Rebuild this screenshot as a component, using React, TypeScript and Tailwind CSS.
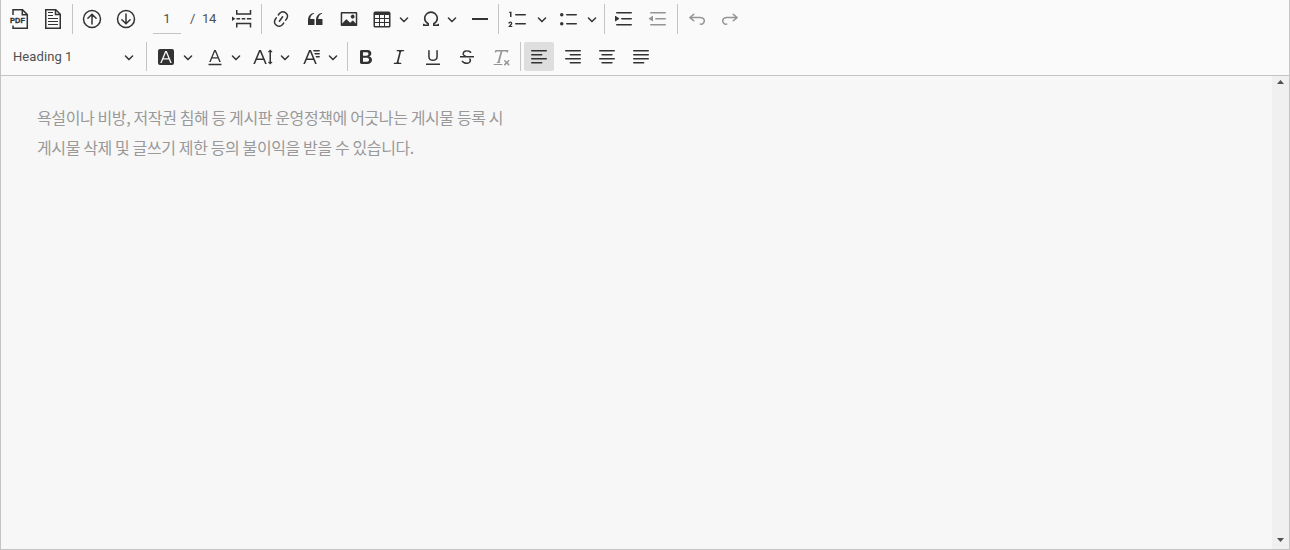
import React from 'react';

type IconProps = { className?: string; children: React.ReactNode };

function Icon({ className = '', children }: IconProps) {
  return (
    <svg viewBox="0 0 20 20" className={`h-5 w-5 shrink-0 fill-current ${className}`}>
      {children}
    </svg>
  );
}

function Chevron({ className = '' }: { className?: string }) {
  return (
    <svg viewBox="0 0 10 10" className={`h-2.5 w-2.5 shrink-0 fill-current ${className}`}>
      <path d="M.941 4.523a.75.75 0 1 1 1.06-1.06l3.006 3.005 3.005-3.005a.75.75 0 1 1 1.06 1.06l-3.549 3.55a.75.75 0 0 1-1.168-.136L.941 4.523z" />
    </svg>
  );
}

function Separator({ className = '' }: { className?: string }) {
  return <span className={`w-px shrink-0 bg-[#c4c4c4] ${className}`} />;
}

const line = { fill: 'none', stroke: 'currentColor', strokeWidth: 1.5, strokeLinecap: 'round' as const };

function TopRow() {
  return (
    <div className="flex h-[38px] items-center pl-2">
      <Icon>
        <path d="M4 6V.8h9.5l4.8 4.8v13.6H4V16.5" fill="none" stroke="currentColor" strokeWidth="1.5" />
        <path d="M13.3 1v4.8h4.8" fill="none" stroke="currentColor" strokeWidth="1.5" />
        <text x="0.9" y="14" textLength="15" className="font-['Liberation_Sans',sans-serif] text-[7.4px] font-bold" stroke="currentColor" strokeWidth="0.3">PDF</text>
      </Icon>
      <Icon className="ml-3.5">
        <path d="M2.75.8h10l4.5 4.5v13.9H2.75z" fill="none" stroke="currentColor" strokeWidth="1.5" />
        <path d="M12.5 1v4.5h4.7" fill="none" stroke="currentColor" strokeWidth="1.5" />
        <path d="M5 3.5h5M5 6.5h5M5 9.5h10M5 12.5h10M5 15.5h10" fill="none" stroke="currentColor" strokeWidth="1" />
      </Icon>
      <Separator className="ml-[9px] h-[30px]" />
      <Icon className="ml-[9px]">
        <circle cx="10" cy="10" r="8.5" {...line} />
        <path d="M10 15V5.7M5.9 9.3 10 5.2l4.1 4.1" {...line} />
      </Icon>
      <Icon className="ml-3.5">
        <circle cx="10" cy="10" r="8.5" {...line} />
        <path d="M10 5v9.3M5.9 10.7l4.1 4.1 4.1-4.1" {...line} />
      </Icon>
      <span className="ml-[17px] flex h-[30px] w-7 items-center justify-center border-b border-[#c4c4c4] text-[#4f4f4f]">1</span>
      <span className="ml-[9px] w-3 text-[#4f4f4f]">/</span>
      <span className="w-[30px] tracking-[-0.3px] text-[#4f4f4f]">14</span>
      <Icon>
        <path d="M4.75 1v4h13.75V1M4.75 18.6v-4h13.75v4" fill="none" stroke="currentColor" strokeWidth="1.5" />
        <path d="M4.5 9.8h3.6M9.7 9.8h3.6M14.9 9.8h4.4" fill="none" stroke="currentColor" strokeWidth="1.6" />
        <path d="M0 7.5v4.6L3.4 9.8z" />
      </Icon>
      <Separator className="ml-[9px] h-[30px]" />
      <Icon className="ml-[9px]">
        <path d="m11.077 15 .991-1.416a.75.75 0 1 1 1.229.86l-1.148 1.64a.748.748 0 0 1-.217.206 5.251 5.251 0 0 1-8.503-5.955.741.741 0 0 1 .12-.274l1.147-1.639a.75.75 0 1 1 1.228.86L4.933 10.7l.006.003a3.75 3.75 0 0 0 6.132 4.294l.006.004zm5.494-5.335a.748.748 0 0 1-.12.274l-1.147 1.639a.75.75 0 1 1-1.228-.86l.86-1.23a3.75 3.75 0 0 0-6.144-4.301l-.86 1.229a.75.75 0 0 1-1.229-.86l1.148-1.64a.748.748 0 0 1 .217-.206 5.251 5.251 0 0 1 8.503 5.955zm-4.563-2.532a.75.75 0 0 1 .184 1.045l-3.155 4.505a.75.75 0 1 1-1.229-.86l3.155-4.506a.75.75 0 0 1 1.045-.184z" />
      </Icon>
      <Icon className="ml-3.5">
        <path d="M3 10.423a6.5 6.5 0 0 1 6.056-6.408l.038.67C6.448 5.423 5.354 7.663 5.22 10H9c.552 0 .5.432.5.986v4.511c0 .554-.448.503-1 .503h-5c-.552 0-.5-.449-.5-1.003v-4.574zm8 0a6.5 6.5 0 0 1 6.056-6.408l.038.67c-2.646.739-3.74 2.979-3.873 5.315H17c.552 0 .5.432.5.986v4.511c0 .554-.448.503-1 .503h-5c-.552 0-.5-.449-.5-1.003v-4.574z" />
      </Icon>
      <Icon className="ml-3.5">
        <path d="M6.91 10.54c.26-.23.64-.21.88.03l3.36 3.14 2.23-2.06a.64.64 0 0 1 .87 0l2.52 2.97V4.5H3.2v10.12l3.71-4.08zm10.27-7.51c.6 0 1.09.47 1.09 1.05v11.84c0 .59-.49 1.06-1.09 1.06H2.79c-.6 0-1.09-.47-1.09-1.06V4.08c0-.58.49-1.05 1.1-1.05h14.38zm-5.22 5.56a1.96 1.96 0 1 1 3.4-1.96 1.96 1.96 0 0 1-3.4 1.96z" />
      </Icon>
      <Icon className="ml-[13px]">
        <path d="M3 6v3h4V6H3zm0 4v3h4v-3H3zm0 4v3h4v-3H3zm5 3h4v-3H8v3zm5 0h4v-3h-4v3zm4-4v-3h-4v3h4zm0-4V6h-4v3h4zm1.5 8a1.5 1.5 0 0 1-1.5 1.5H3A1.5 1.5 0 0 1 1.5 17V4c.222-.863 1.068-1.5 2-1.5h13c.932 0 1.778.637 2 1.5v13zM12 13v-3H8v3h4zm0-4V6H8v3h4z" />
      </Icon>
      <Chevron className="ml-[7px]" />
      <Icon className="ml-3">
        <path d="M2 16.2h5.2v-1.6C4.9 13.3 3.7 11.6 3.7 9.4a6.3 6.3 0 0 1 12.6 0c0 2.2-1.2 3.9-3.5 5.2v1.6H18" fill="none" stroke="currentColor" strokeWidth="1.6" />
        <path d="M2 17v-2.3h1.2l.5.8V17zM18 17v-2.3h-1.2l-.5.8V17z" />
      </Icon>
      <Chevron className="ml-1.5" />
      <Icon className="ml-[13px]">
        <path d="M2 9h16v2H2z" />
      </Icon>
      <Separator className="ml-2 h-[30px]" />
      <Icon className="ml-[9px]">
        <path d="M7 5.75c0 .414.336.75.75.75h9.5a.75.75 0 1 0 0-1.5h-9.5a.75.75 0 0 0-.75.75zM3.5 3v5H2V3.7H1v-1h2.5V3zM.343 17.857l2.59-3.257H2.92a.6.6 0 1 0-1.04 0H.302a2 2 0 1 1 3.995 0h-.001c-.048.405-.16.734-.333.988-.175.254-.59.692-1.244 1.312H4.3v1h-4l.043-.043zM7 14.75a.75.75 0 0 1 .75-.75h9.5a.75.75 0 1 1 0 1.5h-9.5a.75.75 0 0 1-.75-.75z" />
      </Icon>
      <Chevron className="ml-[9px]" />
      <Icon className="ml-3">
        <circle cx="2.75" cy="5.75" r="1.75" />
        <circle cx="2.75" cy="14.75" r="1.75" />
        <path d="M7.75 5.75h9.5M7.75 14.75h9.5" {...line} />
      </Icon>
      <Chevron className="ml-2" />
      <Separator className="ml-[7px] h-[30px]" />
      <Icon className="ml-[9px]">
        <path d="M2.75 3.75h14.5M7.75 9.75h9.5M2.75 15.75h14.5" {...line} />
        <path d="M1.632 6.95 5.02 9.358a.4.4 0 0 1-.013.661l-3.39 2.207A.4.4 0 0 1 1 11.892V7.275a.4.4 0 0 1 .632-.326z" />
      </Icon>
      <Icon className="ml-3.5 opacity-50">
        <path d="M2.75 3.75h14.5M7.75 9.75h9.5M2.75 15.75h14.5" {...line} />
        <path d="M4.368 6.95.98 9.358a.4.4 0 0 0 .013.661l3.39 2.207A.4.4 0 0 0 5 11.892V7.275a.4.4 0 0 0-.632-.326z" />
      </Icon>
      <Separator className="ml-[9px] h-[30px]" />
      <Icon className="ml-[9px] opacity-50">
        <path d="m5.042 9.367 2.189 1.837a.75.75 0 0 1-.965 1.149l-3.788-3.18a.747.747 0 0 1-.21-.284.75.75 0 0 1 .17-.945L6.23 4.762a.75.75 0 1 1 .964 1.15L4.863 7.866h8.917A.75.75 0 0 1 14 7.9a4 4 0 1 1-1.477 7.718l.344-1.489a2.5 2.5 0 1 0 1.094-4.73l.008-.032H5.042z" />
      </Icon>
      <Icon className="ml-[13px] opacity-50">
        <path d="m14.958 9.367-2.189 1.837a.75.75 0 0 0 .965 1.149l3.788-3.18a.747.747 0 0 0 .21-.284.75.75 0 0 0-.17-.945L13.77 4.762a.75.75 0 1 0-.964 1.15l2.331 1.955H6.22A.75.75 0 0 0 6 7.9a4 4 0 1 0 1.477 7.718l-.344-1.489A2.5 2.5 0 1 1 6.039 9.4l-.008-.032h8.927z" />
      </Icon>
    </div>
  );
}

function BottomRow() {
  return (
    <div className="flex h-[37px] items-center pl-3">
      <span className="w-[111px] whitespace-nowrap tracking-[0.08px] text-[#4f4f4f]">Heading 1</span>
      <Chevron />
      <Separator className="ml-3 h-[29px]" />
      <Icon className="ml-[9px]">
        <path fillRule="evenodd" d="M4 2h12a2 2 0 0 1 2 2v12a2 2 0 0 1-2 2H4a2 2 0 0 1-2-2V4a2 2 0 0 1 2-2zm8.38 9.262H7.62L10 5.506l2.38 5.756zm.532 1.285L14.34 16h1.426L10.804 4H9.196L4.234 16H5.66l1.428-3.453h5.824z" />
      </Icon>
      <Chevron className="ml-[7px]" />
      <Icon className="ml-3">
        <path d="M12.4 10.3 10 4.5l-2.4 5.8h4.8zm.5 1.2H7.1L5.7 15H4.2l5-12h1.6l5 12h-1.5L12.9 11.5zM16.5 18.3h-13v-1.5h13z" />
      </Icon>
      <Chevron className="ml-1.5" />
      <Icon className="ml-3">
        <path d="M9.816 11.5 7.038 4.785 4.261 11.5h5.555Zm.62 1.5H3.641l-1.666 4.028H.312l5.789-14h1.875l5.789 14h-1.663L10.436 13Zm7.55 2.279.779-.779.707.707-2.265 2.265-2.193-2.265.707-.707.765.765V4.825c0-.042 0-.083.002-.123l-.77.77-.707-.707L17.207 2.5l2.265 2.265-.707.707-.782-.782c.002.043.003.089.003.135v10.454Z" />
      </Icon>
      <Chevron className="ml-[7px]" />
      <Icon className="ml-3">
        <path d="M11.03 3h6.149a.75.75 0 1 1 0 1.5h-5.514L11.03 3zm1.27 3h4.879a.75.75 0 1 1 0 1.5h-4.244L12.3 6zm1.27 3h3.609a.75.75 0 1 1 0 1.5h-2.973L13.57 9zm-2.754 2.5L8.038 4.785 5.261 11.5h5.555zm.62 1.5H4.641l-1.666 4.028H1.312l5.789-14h1.875l5.789 14h-1.663L11.436 13z" />
      </Icon>
      <Chevron className="ml-1.5" />
      <Separator className="ml-[9px] h-[29px]" />
      <Icon className="ml-2">
        <path d="M10.187 17H5.773c-.637 0-1.092-.138-1.364-.415-.273-.277-.409-.718-.409-1.323V4.738c0-.617.14-1.062.419-1.332.279-.27.73-.406 1.354-.406h4.68c.69 0 1.288.041 1.793.124.506.083.96.242 1.36.477.341.197.644.447.906.75a3.262 3.262 0 0 1 .808 2.162c0 1.401-.722 2.426-2.167 3.075C15.05 10.175 16 11.315 16 13.01a3.756 3.756 0 0 1-2.296 3.504 6.1 6.1 0 0 1-1.517.377c-.571.073-1.238.11-2 .11zm-.217-6.217H7v4.087h3.069c1.977 0 2.965-.69 2.965-2.072 0-.707-.256-1.22-.768-1.537-.512-.319-1.277-.478-2.296-.478zM7 5.13v3.619h2.606c.729 0 1.292-.067 1.69-.2a1.6 1.6 0 0 0 .91-.765c.165-.267.247-.566.247-.897 0-.707-.26-1.176-.778-1.409-.519-.232-1.31-.348-2.375-.348H7z" />
      </Icon>
      <Icon className="ml-[13px]">
        <path d="m9.586 14.633.021.004c-.036.335.095.655.393.962.082.083.173.15.274.201h1.474a.6.6 0 1 1 0 1.2H5.304a.6.6 0 0 1 0-1.2h1.15c.474-.07.809-.182 1.005-.334.157-.122.291-.32.404-.597l2.416-9.55a1.053 1.053 0 0 0-.281-.823 1.12 1.12 0 0 0-.442-.296H8.15a.6.6 0 0 1 0-1.2h6.443a.6.6 0 1 1 0 1.2h-1.195c-.376.056-.65.155-.823.296-.215.175-.423.439-.623.79l-2.366 9.347z" />
      </Icon>
      <Icon className="ml-3.5">
        <path d="M3 18v-1.5h14V18zm2.2-8V3.6c0-.4.4-.6.8-.6.3 0 .7.2.7.6v6.2c0 2 1.3 2.8 3.2 2.8 1.9 0 3.4-.9 3.4-2.9V3.6c0-.3.4-.5.8-.5.3 0 .7.2.7.5V10c0 2.7-2.2 4-4.9 4-2.6 0-4.7-1.2-4.7-4z" />
      </Icon>
      <Icon className="ml-3.5">
        <path d="M7 16.4c-.8-.4-1.5-.9-2.2-1.5a.6.6 0 0 1-.2-.5l.3-.6h1c1 1.2 2.1 1.7 3.7 1.7 1 0 1.8-.3 2.3-.6.6-.4.6-1.2.6-1.3.2-1.2-.9-2.1-.9-2.1h2.1c.3.7.4 1.2.4 1.7v.8l-.6 1.2c-.6.8-1.1 1-1.6 1.2a6 6 0 0 1-2.4.6c-1 0-1.8-.3-2.5-.6zM6.8 9L6 8.3c-.4-.5-.5-.8-.5-1.6 0-.7.1-1.3.5-1.8.4-.6 1-1 1.6-1.3a6.3 6.3 0 0 1 4.7 0 4 4 0 0 1 1.7 1l.3.7c0 .1.2.4-.2.7-.4.2-.9.1-1 0a3 3 0 0 0-1.2-1c-.4-.2-1-.3-2-.4-.7 0-1.4.2-2 .6-.8.5-1 .8-1 1.5 0 .8.5 1 1.2 1.5.6.4 1.1.7 1.9 1H6.8zM3 10.5V9h14v1.5z" />
      </Icon>
      <Icon className="ml-3.5 opacity-50">
        <path d="M8.69 14.915c.053.052.173.083.36.093a.366.366 0 0 1 .345.485l-.003.01a.738.738 0 0 1-.697.497h-2.67a.374.374 0 0 1-.353-.496l.013-.038a.681.681 0 0 1 .644-.458c.197-.012.325-.043.386-.093a.28.28 0 0 0 .072-.11L9.592 4.5H6.269c-.359-.017-.609.013-.75.09-.142.078-.289.265-.442.563-.192.29-.516.464-.864.464H4.17a.43.43 0 0 1-.407-.569L4.46 3h13.08l-.62 2.043a.81.81 0 0 1-.775.574h-.114a.486.486 0 0 1-.486-.486c.001-.284-.054-.464-.167-.54-.112-.076-.367-.106-.766-.091h-3.28l-2.68 10.257c-.006.074.007.127.038.158zM3 17h8a.5.5 0 1 1 0 1H3a.5.5 0 1 1 0-1zm11.299 1.17a.75.75 0 1 1-1.06-1.06l1.414-1.415-1.415-1.414a.75.75 0 0 1 1.06-1.06l1.415 1.414 1.414-1.415a.75.75 0 1 1 1.06 1.06l-1.413 1.415 1.414 1.415a.75.75 0 0 1-1.06 1.06l-1.415-1.414-1.414 1.414z" />
      </Icon>
      <Separator className="ml-[9px] h-[29px]" />
      <span className="ml-[3px] flex h-[29px] w-[30px] items-center justify-center rounded-xs bg-[#dedede]">
        <Icon>
          <path d="M2.75 3.75h14.5M2.75 7.75h9.93M2.75 11.75h14.5M2.75 15.75h9.93" {...line} />
        </Icon>
      </span>
      <Icon className="ml-[9px]">
        <path d="M2.75 3.75h14.5M7.32 7.75h9.93M2.75 11.75h14.5M7.32 15.75h9.93" {...line} />
      </Icon>
      <Icon className="ml-3.5">
        <path d="M2.75 3.75h14.5M5.04 7.75h9.92M2.75 11.75h14.5M5.04 15.75h9.92" {...line} />
      </Icon>
      <Icon className="ml-3.5">
        <path d="M2.75 3.75h14.5M2.75 7.75h14.5M2.75 11.75h14.5M2.75 15.75h9.93" {...line} />
      </Icon>
    </div>
  );
}

export default function App() {
  return (
    <div className="flex h-[550px] w-[1290px] flex-col border-x border-b border-[#c4c4c4] bg-[#f7f7f7]">
      <div className="h-[76px] shrink-0 border-b border-[#c4c4c4] bg-[#fafafa] font-[Roboto,sans-serif] text-[13px] text-[#333]">
        <TopRow />
        <BottomRow />
      </div>
      <div className="flex min-h-0 flex-1">
        <div className="flex-1 pt-[26px] pl-9 font-['Noto_Sans_CJK_KR',sans-serif] text-base leading-[30px] tracking-[-0.385px] text-[#999]">
          <p>욕설이나 비방, 저작권 침해 등 게시판 운영정책에 어긋나는 게시물 등록 시</p>
          <p>게시물 삭제 및 글쓰기 제한 등의 불이익을 받을 수 있습니다.</p>
        </div>
        <div className="flex w-[17px] flex-col items-center justify-between bg-[#f0f0f0] pt-1 pb-[7px]">
          <svg viewBox="0 0 7 4" className="h-1 w-[7px] fill-[#505050]"><path d="M3.5 0 7 4H0z" /></svg>
          <svg viewBox="0 0 7 4" className="h-1 w-[7px] fill-[#505050]"><path d="M3.5 4 7 0H0z" /></svg>
        </div>
      </div>
    </div>
  );
}
